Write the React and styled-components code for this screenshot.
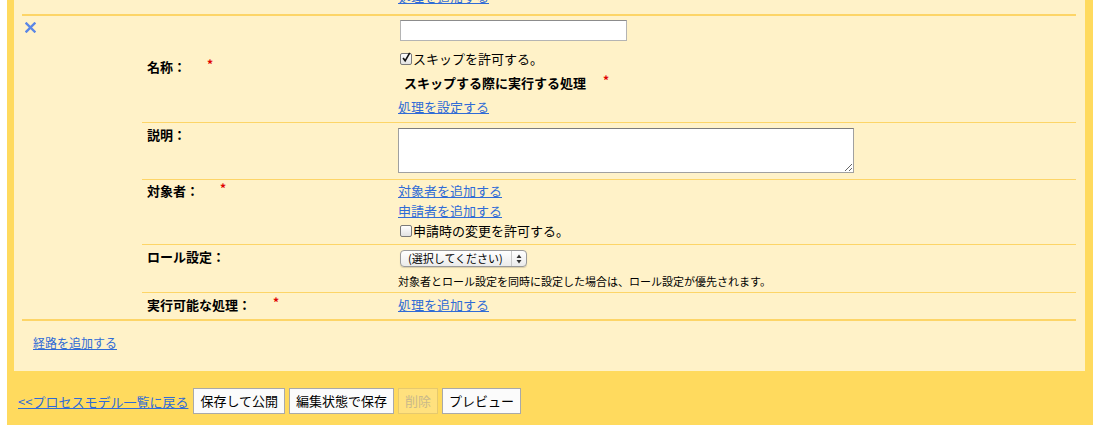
import React from 'react';
import styled, { createGlobalStyle } from 'styled-components';

const GlobalStyle = createGlobalStyle`
  body {
    margin: 0;
    background: #fff;
    font-family: "Noto Sans CJK JP", "Liberation Sans", sans-serif;
    font-size: 13px;
    color: #000;
  }
`;

const Frame = styled.div`
  width: 1086px;
  margin: -13px 0 0 7px;
  background: #ffda5e;
`;

const Panel = styled.div`
  margin: 0 8px 0 7px;
  background: #fff2c8;
  padding: 0 0 19px;
`;

const RouteBlock = styled.div`
  display: flex;
  margin: 0 9px 0 8px;
  border-top: ${p => (p.$tail ? 'none' : '2px solid #fdd567')};
  border-bottom: ${p => (p.$tail ? 'none' : '2px solid #fdd567')};
`;

const XCell = styled.div`
  width: 120px;
  flex: none;
  padding: 5px 0 0 3px;
  box-sizing: border-box;
`;

const RemoveButton = styled.button`
  display: block;
  width: 11px;
  height: 11px;
  padding: 0;
  border: 0;
  background: none;
  cursor: pointer;
  color: #5b87e6;
`;

const Table = styled.div`
  flex: 1;
`;

const Row = styled.div`
  display: grid;
  grid-template-columns: 256px 1fr;
  border-top: ${p => (p.$first ? 'none' : '1px solid #fdd567')};
  height: ${p => p.$h}px;
  box-sizing: border-box;
`;

const Label = styled.div`
  display: flex;
  align-items: ${p => (p.$middle ? 'center' : 'flex-start')};
  padding: ${p => p.$pt || 0}px 0 ${p => p.$pb || 0}px 5px;
  font-weight: bold;
  line-height: 20px;
`;

const Required = styled.span`
  color: #e00000;
  font-size: 12px;
  font-weight: bold;
  margin-left: ${p => p.$gap || 21}px;
  position: relative;
  top: -3px;
`;

const Value = styled.div`
  display: flex;
  flex-direction: column;
  align-items: flex-start;
  padding-top: ${p => p.$pt || 0}px;
`;

const Line = styled.div`
  display: flex;
  align-items: center;
  line-height: ${p => p.$lh || 20}px;
  height: ${p => p.$lh || 20}px;
  padding-left: ${p => p.$indent || 0}px;
  font-weight: ${p => (p.$bold ? 'bold' : 'normal')};
`;

const Link = styled.a`
  color: #2f6bd6;
  text-decoration: underline;
  font-size: ${p => p.$size || 13}px;
  cursor: pointer;
`;

const TextInput = styled.input`
  width: 227px;
  height: 21px;
  box-sizing: border-box;
  margin: 4px 0 6px 2px;
  border: 1px solid #b4b4b4;
  border-top-color: #8c8c8c;
  background: #fff;
  padding: 1px 3px;
  font: inherit;
`;

const TextArea = styled.textarea`
  display: block;
  width: 456px;
  height: 45px;
  box-sizing: border-box;
  margin: 0;
  border: 1px solid #a0a0a0;
  border-top-color: #7c7c7c;
  background: #fff;
  font: inherit;
`;

const CheckBox = styled.span`
  width: 12px;
  height: 12px;
  box-sizing: border-box;
  margin: 0 1px 0 2px;
  border: 1px solid #7a7a7a;
  border-radius: 2px;
  background: linear-gradient(#ffffff, #e2e2e2);
  display: inline-flex;
  align-items: center;
  justify-content: center;
  overflow: visible;
`;

const SelectBox = styled.div`
  display: flex;
  align-items: center;
  width: 127px;
  height: 17px;
  box-sizing: border-box;
  margin: 0 0 6px 2px;
  border: 1px solid #9a9a9a;
  border-radius: 4px;
  background: linear-gradient(#ffffff, #ebebeb);
  box-shadow: 0 1px 1px rgba(0, 0, 0, 0.15);
`;

const SelectText = styled.span`
  flex: 1;
  padding-left: 7px;
  font-size: 11px;
  line-height: 15px;
`;

const SelectArrows = styled.span`
  width: 14px;
  height: 15px;
  border-left: 1px solid #c8c8c8;
  display: flex;
  align-items: center;
  justify-content: center;
`;

const Note = styled.div`
  font-size: 11px;
  line-height: 16px;
`;

const AddRoute = styled.div`
  padding: 13px 0 0 19px;
  line-height: 18px;
`;

const Footer = styled.div`
  display: flex;
  align-items: center;
  gap: 4px;
  padding: 17px 0 11px 11px;
`;

const Button = styled.button`
  height: 26px;
  padding: 0 6px;
  border: 1px solid ${p => (p.disabled ? '#e6c96e' : '#a9a9a9')};
  background: ${p => (p.disabled ? 'rgba(255,255,255,0.2)' : '#fbfbfb')};
  color: ${p => (p.disabled ? '#c9b98a' : '#000')};
  font-family: inherit;
  font-size: 13px;
  line-height: 24px;
  cursor: ${p => (p.disabled ? 'default' : 'pointer')};
`;

const BackLink = styled(Link)`
  margin-right: 1px;
`;

function Cross() {
  return (
    <svg width="11" height="11" viewBox="0 0 11 11">
      <path d="M1.5 1.5 L9.5 9.5 M9.5 1.5 L1.5 9.5" stroke="currentColor" strokeWidth="2.4" strokeLinecap="square" />
    </svg>
  );
}

function Check({ checked }) {
  return (
    <CheckBox>
      {checked && (
        <svg width="12" height="13" viewBox="0 0 12 13" style={{ marginTop: -3 }}>
          <path d="M2.5 7 L5 10.5 L10.5 1" fill="none" stroke="#111" strokeWidth="2" />
        </svg>
      )}
    </CheckBox>
  );
}

export default function App() {
  return (
    <>
      <GlobalStyle />
      <Frame>
        <Panel>
          <RouteBlock $tail>
            <XCell />
            <Table>
              <Row $first $h={20}>
                <div />
                <Value>
                  <Line>
                    <Link>処理を追加する</Link>
                  </Line>
                </Value>
              </Row>
            </Table>
          </RouteBlock>
          <div style={{ height: 7 }} />
          <RouteBlock>
            <XCell>
              <RemoveButton aria-label="削除">
                <Cross />
              </RemoveButton>
            </XCell>
            <Table>
              <Row $first $h={106}>
                <Label $middle $pb={5}>
                  名称：<Required>*</Required>
                </Label>
                <Value>
                  <TextInput type="text" />
                  <Line $lh={24}>
                    <Check checked />
                    スキップを許可する。
                  </Line>
                  <Line $lh={24} $bold $indent={6}>
                    スキップする際に実行する処理<Required $gap={17}>*</Required>
                  </Line>
                  <Line $lh={24}>
                    <Link>処理を設定する</Link>
                  </Line>
                </Value>
              </Row>
              <Row $h={57}>
                <Label $pt={2}>説明：</Label>
                <Value $pt={5}>
                  <TextArea />
                </Value>
              </Row>
              <Row $h={65}>
                <Label $pt={1}>
                  対象者：<Required>*</Required>
                </Label>
                <Value $pt={1}>
                  <Line>
                    <Link>対象者を追加する</Link>
                  </Line>
                  <Line>
                    <Link>申請者を追加する</Link>
                  </Line>
                  <Line>
                    <Check />
                    申請時の変更を許可する。
                  </Line>
                </Value>
              </Row>
              <Row $h={48}>
                <Label $pt={2}>ロール設定：</Label>
                <Value $pt={5}>
                  <SelectBox>
                    <SelectText>(選択してください)</SelectText>
                    <SelectArrows>
                      <svg width="6" height="10" viewBox="0 0 6 10">
                        <path d="M3 0.5 L5.5 4 L0.5 4 Z M3 9.5 L5.5 6 L0.5 6 Z" fill="#333" />
                      </svg>
                    </SelectArrows>
                  </SelectBox>
                  <Note>対象者とロール設定を同時に設定した場合は、ロール設定が優先されます。</Note>
                </Value>
              </Row>
              <Row $h={27}>
                <Label $pt={2}>
                  実行可能な処理：<Required $gap={22}>*</Required>
                </Label>
                <Value $pt={2}>
                  <Line>
                    <Link>処理を追加する</Link>
                  </Line>
                </Value>
              </Row>
            </Table>
          </RouteBlock>
          <AddRoute>
            <Link $size={12}>経路を追加する</Link>
          </AddRoute>
        </Panel>
        <Footer>
          <BackLink>&lt;&lt;プロセスモデル一覧に戻る</BackLink>
          <Button>保存して公開</Button>
          <Button>編集状態で保存</Button>
          <Button disabled>削除</Button>
          <Button>プレビュー</Button>
        </Footer>
      </Frame>
    </>
  );
}
